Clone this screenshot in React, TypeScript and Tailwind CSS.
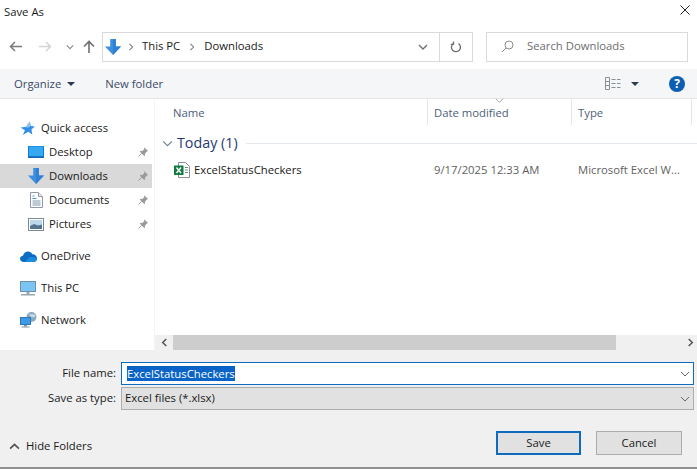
import React from "react";

const Pin = () => (
  <svg width="12" height="12" viewBox="0 0 12 12" className="shrink-0">
    <path d="M7 1l4 4-1 .5-2 2 .2 1.800-1 .7L2.900 5.800l.7-1 1.800.2 2-2z" fill="#9a9a9a" />
    <path d="M4.600 7.400L1.500 10.500" stroke="#9a9a9a" strokeWidth="1" fill="none" />
  </svg>
);

const DownArrow = ({ s = 16 }: { s?: number }) => (
  <svg width={s} height={s} viewBox="0 0 16 16" className="shrink-0">
    <path d="M5.200 0h5.600v7.500H16L8 16 0 7.500h5.200z" fill="#3d8fe0" />
    <path d="M8 0h2.800v7.500H16L8 16z" fill="#2f7fd2" />
  </svg>
);

const Star = () => (
  <svg width="15" height="15" viewBox="0 0 16 16" className="shrink-0">
    <path d="M10.500 0.500l.9 4.800 4.300.6-3.500 3.200.9 5.400-4.300-3-5.800 3.500 2.300-5.200L.5 6.800l5.700-.3z" fill="#2f8fe6" />
    <path d="M10.500.5l.9 4.800-3.300 2-1.900-.8z" fill="#8cc8f4" />
  </svg>
);

const Desktop = () => (
  <svg width="16" height="14" viewBox="0 0 16 14" className="shrink-0">
    <rect x="0" y="1" width="16" height="12" fill="#0f7fdc" />
    <rect x="1" y="1.500" width="14" height="9.500" fill="#35a8f2" />
    <rect x="0" y="11.500" width="16" height="1.500" fill="#1668b4" />
  </svg>
);

const Doc = () => (
  <svg width="13" height="16" viewBox="0 0 13 16" className="shrink-0">
    <path d="M.5.500h8l4 4v11H.5z" fill="#fff" stroke="#8f9aa6" />
    <path d="M8.500.500v4h4" fill="#e5ebf1" stroke="#8f9aa6" />
    <path d="M2.500 4h2M2.500 6.500h4" stroke="#4f93cf" />
    <path d="M2.500 9h8M2.500 11h8M2.500 13h8" stroke="#7c94aa" />
  </svg>
);

const Pic = () => (
  <svg width="16" height="13" viewBox="0 0 16 13" className="shrink-0">
    <rect x=".5" y=".5" width="15" height="12" fill="#fff" stroke="#7d8a96" />
    <rect x="2" y="2" width="12" height="9" fill="#bcd9ec" />
    <path d="M2 8l4-2 4 1.500 4-1V11H2z" fill="#54738c" />
  </svg>
);

const Cloud = () => (
  <svg width="17" height="11" viewBox="0 0 17 11" className="shrink-0">
    <path d="M4 11C1.500 11 0 9.600 0 7.800 0 6 1.300 4.800 3 4.700 3.700 2 5.700.5 8 .5c1.900 0 3.500 1 4.300 2.800 2.700-.1 4.700 1.700 4.700 4.100C17 9.500 15.500 11 13.500 11z" fill="#0f6cc4" />
    <path d="M5 11l5-5 4 .5 3 1.500c-.2 1.700-1.600 3-3.500 3z" fill="#1c8ee0" />
  </svg>
);

const Monitor = () => (
  <svg width="16" height="15" viewBox="0 0 16 15" className="shrink-0">
    <rect x=".5" y=".5" width="15" height="10" fill="#7cc5f2" stroke="#6b93b0" />
    <path d="M6.500 11h3v2h-3z" fill="#9aa7b2" />
    <rect x="1" y="13" width="14" height="1.500" fill="#9aa7b2" />
  </svg>
);

const NetworkIcon = () => (
  <svg width="17" height="16" viewBox="0 0 17 16" className="shrink-0">
    <circle cx="11.500" cy="5" r="5" fill="#8da9bf" />
    <path d="M9 1.500c2 1 4 1 5.500.5l1 2.500-3 1-2-1z" fill="#c4d9e8" />
    <rect x="0.500" y="5.500" width="10" height="7" fill="#3c9ae6" stroke="#2a77bd" />
    <path d="M4 13h3v1.500H4z" fill="#7d96aa" />
    <rect x="1.500" y="14.500" width="8" height="1" fill="#7d96aa" />
  </svg>
);

const Excel = () => (
  <svg width="16" height="16" viewBox="0 0 16 16" className="shrink-0">
    <path d="M4.500.5h7l4 4v11h-11z" fill="#fff" stroke="#8a8f94" />
    <path d="M11 5.500h3M11 8h3M11 10.500h3" stroke="#6f8f7c" />
    <rect x="0" y="3.500" width="9.500" height="9.500" fill="#107c41" />
    <path d="M2.500 5.500l4.500 5.500M7 5.500l-4.500 5.500" stroke="#fff" strokeWidth="1.400" />
  </svg>
);

const Chevron = ({ c = "#6d6d6d", w = 9, dir = "down", sw = 1 }: { c?: string; w?: number; dir?: "down" | "up" | "left" | "right"; sw?: number }) => {
  const d = {
    down: "M1 3l4 4 4-4",
    up: "M1 7l4-4 4 4",
    left: "M7 1L3 5l4 4",
    right: "M3 1l4 4-4 4",
  }[dir];
  return (
    <svg width={w} height={w} viewBox="0 0 10 10" className="shrink-0">
      <path d={d} stroke={c} strokeWidth={sw} fill="none" />
    </svg>
  );
};

const Caret = () => (
  <svg width="8" height="4" viewBox="0 0 8 4" className="shrink-0">
    <path d="M0 0h8L4 4z" fill="#2b3a50" />
  </svg>
);

const Row = ({ icon, label, active }: { icon: React.ReactNode; label: string; active?: boolean }) => (
  <div className={`h-6 flex items-center pr-[3px] ${active ? "bg-[#d9d9d9]" : ""}`}>
    <div className="w-[49px] pl-[28px] flex justify-center shrink-0 pr-[5px]">{icon}</div>
    <span className="flex-1">{label}</span>
    <Pin />
  </div>
);

const Root = ({ icon, label, className = "" }: { icon: React.ReactNode; label: string; className?: string }) => (
  <div className={`h-6 flex items-center ${className}`}>
    <div className="w-[41px] pl-[20px] shrink-0">{icon}</div>
    <span>{label}</span>
  </div>
);

export default function App() {
  return (
    <div className="w-[697px] h-[469px] bg-white flex flex-col overflow-hidden text-[11.300px] text-[#1a1a1a] font-['Open_Sans','Noto_Sans',sans-serif]">
      {/* title bar */}
      <div className="h-[24px] flex items-center justify-between pl-1 pr-[7px] shrink-0">
        <span className="text-[11.300px]">Save As</span>
        <svg width="10" height="10" viewBox="0 0 10 10" className="mb-[4px]"><path d="M.5.500l9 9M9.500.500l-9 9" stroke="#222" strokeWidth="1" /></svg>
      </div>

      {/* nav */}
      <div className="h-[45px] flex items-center shrink-0 pl-[9px]">
        <div className="w-[13px] flex justify-center">
          <svg width="13" height="11" viewBox="0 0 13 11"><path d="M13 5.500H2M6 1L1.500 5.500 6 10" stroke="#7a7a7a" strokeWidth="1.500" fill="none" /></svg>
        </div>
        <div className="w-[13px] ml-[17px]">
          <svg width="13" height="11" viewBox="0 0 13 11"><path d="M0 5.500h11M7 1l4.500 4.500L7 10" stroke="#d4d4d4" strokeWidth="1.500" fill="none" /></svg>
        </div>
        <div className="ml-[14px] w-[8px]"><Chevron w={8} c="#8a8a8a" sw={1.400} /></div>
        <div className="ml-[9px] w-[13px]">
          <svg width="12" height="13" viewBox="0 0 12 13"><path d="M6 13V2M1 6.500L6 1.500l5 5" stroke="#6e6e6e" strokeWidth="1.600" fill="none" /></svg>
        </div>
        <div className="ml-[6px] w-[371px] h-[30px] border border-[#d9d9d9] flex items-center">
          <div className="pl-[2px]"><DownArrow /></div>
          <div className="ml-[6px]"><Chevron w={8} c="#7a7a7a" dir="right" sw={1.300} /></div>
          <span className="ml-[7px]">This PC</span>
          <div className="ml-[8px]"><Chevron w={8} c="#7a7a7a" dir="right" sw={1.300} /></div>
          <span className="ml-[8px]">Downloads</span>
          <div className="flex-1 flex justify-end pr-[11px]"><Chevron w={10} c="#6f6f6f" sw={1.400} /></div>
          <div className="w-[33px] h-full border-l border-[#d9d9d9] flex items-center justify-center">
            <svg width="12" height="12" viewBox="0 0 12 12"><path d="M8.500 2.500a4.500 4.500 0 1 1-5.500.300M3.500 0.500v2.800H.800" stroke="#6e6e6e" strokeWidth="1.300" fill="none" /></svg>
          </div>
        </div>
        <div className="ml-[13px] w-[202px] h-[30px] border border-[#d9d9d9] flex items-center pl-[14px] text-[#6d6d6d]">
          <svg width="13" height="13" viewBox="0 0 13 13" className="shrink-0"><circle cx="8" cy="5" r="4" stroke="#8f8f8f" fill="none" /><path d="M5 8l-4 4" stroke="#8f8f8f" /></svg>
          <span className="ml-[13px]">Search Downloads</span>
        </div>
      </div>

      {/* toolbar */}
      <div className="h-[30px] bg-[#f5f6f7] border-b border-[#e5e5e5] flex items-center shrink-0 pl-[14px] text-[#3a4a66]">
        <span className="pt-px">Organize</span>
        <div className="ml-[6px]"><Caret /></div>
        <span className="ml-[30px] pt-px">New folder</span>
        <div className="flex-1 flex justify-end items-center">
          <svg width="16" height="13" viewBox="0 0 16 13" className="shrink-0">
            <path d="M.5.500h4v12h-4zM.5 4.500h4M.5 8.500h4M6.500 2.500h4M12 2.500h3.500M6.500 6.500h4M12 6.500h3.500M6.500 10.500h4M12 10.500h3.500" stroke="#8a8f96" fill="none" />
          </svg>
          <div className="ml-[10px]"><Caret /></div>
          <div className="ml-[30px] mr-[12px] w-4 h-4 rounded-full bg-[#0d5fb3] flex items-center justify-center text-white font-bold text-[12px] leading-none">?</div>
        </div>
      </div>

      {/* main */}
      <div className="flex-1 flex min-h-0">
        <div className="w-[155px] shrink-0 pt-[17px] pr-[2px] border-r border-[#f5f5f5]">
          <Root icon={<Star />} label="Quick access" />
          <Row icon={<Desktop />} label="Desktop" />
          <Row icon={<DownArrow />} label="Downloads" active />
          <Row icon={<Doc />} label="Documents" />
          <Row icon={<Pic />} label="Pictures" />
          <Root icon={<Cloud />} label="OneDrive" className="mt-2" />
          <Root icon={<Monitor />} label="This PC" className="mt-2" />
          <Root icon={<NetworkIcon />} label="Network" className="mt-2" />
        </div>
        <div className="flex-1 flex flex-col min-w-0">
          <div className="flex-1 min-h-0">
            <div className="h-[26px] flex text-[#4c607a]">
              <div className="w-[273px] pl-[18px] pt-[2px] border-r border-[#e5e5e5] flex items-center">Name</div>
              <div className="relative w-[144px] pl-[6px] pt-[2px] border-r border-[#e5e5e5] flex items-center">
                Date modified
                <div className="absolute left-[67px] top-[-3px]"><Chevron w={9} c="#9a9a9a" /></div>
              </div>
              <div className="w-[120px] pl-[6px] pt-[2px] border-r border-[#e5e5e5] flex items-center">Type</div>
            </div>
            <div className="h-[24px] mt-[6px] flex items-center pl-[7px] text-[#1e3a70]">
              <Chevron w={11} c="#6e7f96" />
              <span className="ml-[4px] text-[14.300px]">Today (1)</span>
              <div className="ml-2 flex-1 h-px bg-[#e3e7ee]" />
            </div>
            <div className="h-[22px] mt-[4px] flex items-center">
              <div className="w-[279px] pl-[19px] flex items-center">
                <Excel />
                <span className="ml-1">ExcelStatusCheckers</span>
              </div>
              <div className="w-[144px] text-[#5f5f5f]">9/17/2025 12:33 AM</div>
              <div className="flex-1 text-[#5f5f5f] whitespace-nowrap overflow-hidden">Microsoft Excel W...</div>
            </div>
          </div>
          {/* h scrollbar */}
          <div className="h-[15px] bg-[#f0f0f0] flex items-center shrink-0">
            <div className="w-[18px] flex justify-center"><Chevron w={9} c="#505050" dir="left" sw={1.600} /></div>
            <div className="w-[443px] h-full bg-[#cdcdcd]" />
            <div className="flex-1 flex justify-end pr-[2px]"><Chevron w={9} c="#505050" dir="right" sw={1.600} /></div>
          </div>
        </div>
      </div>

      {/* footer */}
      <div className="h-[119px] bg-[#f0f0f0] shrink-0 border-b-2 border-[#8f8f8f] flex flex-col">
        <div className="mt-[12px] flex items-center h-[23px]">
          <div className="w-[116px] text-right">File name:</div>
          <div className="ml-[5px] w-[573px] h-full bg-white border border-[#0f6cbd] flex items-center pl-[5px] pr-[3px]">
            <span className="bg-[#0a64c8] text-white leading-[15px] h-[15px]">ExcelStatusCheckers</span>
            <div className="flex-1 flex justify-end"><Chevron w={10} c="#666" /></div>
          </div>
        </div>
        <div className="mt-[2px] flex items-center h-[23px]">
          <div className="w-[116px] text-right">Save as type:</div>
          <div className="ml-[5px] w-[573px] h-full bg-[#e1e1e1] border border-[#adadad] flex items-center pl-[3px] pr-[3px]">
            <span>Excel files (*.xlsx)</span>
            <div className="flex-1 flex justify-end"><Chevron w={10} c="#666" /></div>
          </div>
        </div>
        <div className="flex-1 flex items-start">
          <div className="flex items-center pl-[9px] mt-[26px] h-[20px]">
            <Chevron w={11} c="#505050" dir="up" sw={1.500} />
            <span className="ml-[6px]">Hide Folders</span>
          </div>
          <div className="flex-1 flex justify-end pr-[15px] mt-[21px]">
            <div className="w-[85px] h-[24px] bg-[#e1e1e1] border-2 border-[#0f6cbd] flex items-center justify-center">Save</div>
            <div className="ml-[15px] w-[86px] h-[24px] bg-[#e1e1e1] border border-[#adadad] flex items-center justify-center">Cancel</div>
          </div>
        </div>
      </div>
    </div>
  );
}
